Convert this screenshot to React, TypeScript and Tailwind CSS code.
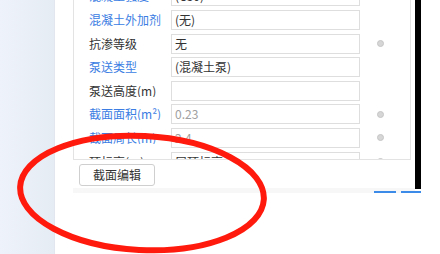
import React from 'react';

interface Row {
  label: string;
  value: string;
  blue?: boolean;
  muted?: boolean;
  dot?: boolean;
}

const rows: Row[] = [
  { label: '混凝土强度等级', value: '(C30)', blue: true },
  { label: '混凝土外加剂', value: '(无)', blue: true },
  { label: '抗渗等级', value: '无', dot: true },
  { label: '泵送类型', value: '(混凝土泵)', blue: true },
  { label: '泵送高度(m)', value: '' },
  { label: '截面面积(m²)', value: '0.23', blue: true, muted: true, dot: true },
  { label: '截面周长(m)', value: '2.4', blue: true, muted: true, dot: true },
  { label: '顶标高(m)', value: '层顶标高', dot: true },
];

const font = { fontFamily: '"Noto Sans CJK SC", "Noto Sans", sans-serif' };

const PropRow: React.FC<{ row: Row }> = ({ row }) => (
  <div className="flex items-center h-[23.6px] shrink-0">
    <div className={`w-[82px] pl-[15px] box-content truncate text-[12px] leading-none ${row.blue ? 'text-[#3b7de3]' : 'text-[#333]'}`}>
      {row.label}
    </div>
    <div className={`w-[189px] h-[20px] border border-[#dedede] flex items-center px-[3px] text-[12px] ${row.muted ? 'text-[#a0a0a0]' : 'text-[#333]'}`}>
      {row.value}
    </div>
    <div className="w-[36px] flex justify-center pl-[5px]">
      {row.dot && <div className="w-[7px] h-[7px] rounded-full bg-[#d6d6d6] border border-[#c6c6c6]" />}
    </div>
  </div>
);

export default function App() {
  return (
    <div className="w-[440px] h-[254px] flex bg-white relative overflow-hidden" style={font}>
      {/* side strip */}
      <div className="w-[55px] h-full bg-gradient-to-r from-[#eef3fb] to-[#e6ecf4] border-r border-[#e2e7ef]" />

      <div className="flex-1 flex flex-col">
        <div className="flex">
          <div className="pl-[18px] w-[360px] flex flex-col">
            {/* property table */}
            <div className="w-[338px] h-[160px] border-l border-r border-b border-[#e3e3e3] overflow-hidden flex flex-col">
              <div className="mt-[-15.4px] flex flex-col">
                {rows.map((r) => (
                  <PropRow key={r.label} row={r} />
                ))}
              </div>
            </div>
            <div className="h-[28px] pl-[6px] pt-[4px]">
              <button className="w-[76px] h-[22px] rounded-[3px] border border-[#cfcfcf] bg-white text-[12px] text-[#333] flex items-center justify-center">
                截面编辑
              </button>
            </div>
            <div className="h-[5px] ml-[0px] w-[342px] bg-[#f7f7f7]" />
          </div>
          <div className="w-[6px] h-[189px] bg-black" />
        </div>
        <div className="flex h-[2px] mt-[-2px]">
          <div className="ml-[319px] w-[22px] h-full bg-[#3d8be8]" />
          <div className="ml-[5px] w-[20px] h-full bg-[#3d8be8]" />
        </div>
      </div>

      {/* annotation */}
      <svg className="absolute inset-0 pointer-events-none" width="440" height="254" viewBox="0 0 440 254">
        <ellipse cx="142" cy="193" rx="122" ry="57" fill="none" stroke="#ff1a0d" strokeWidth="6" transform="rotate(3 142 193)" />
      </svg>
    </div>
  );
}
